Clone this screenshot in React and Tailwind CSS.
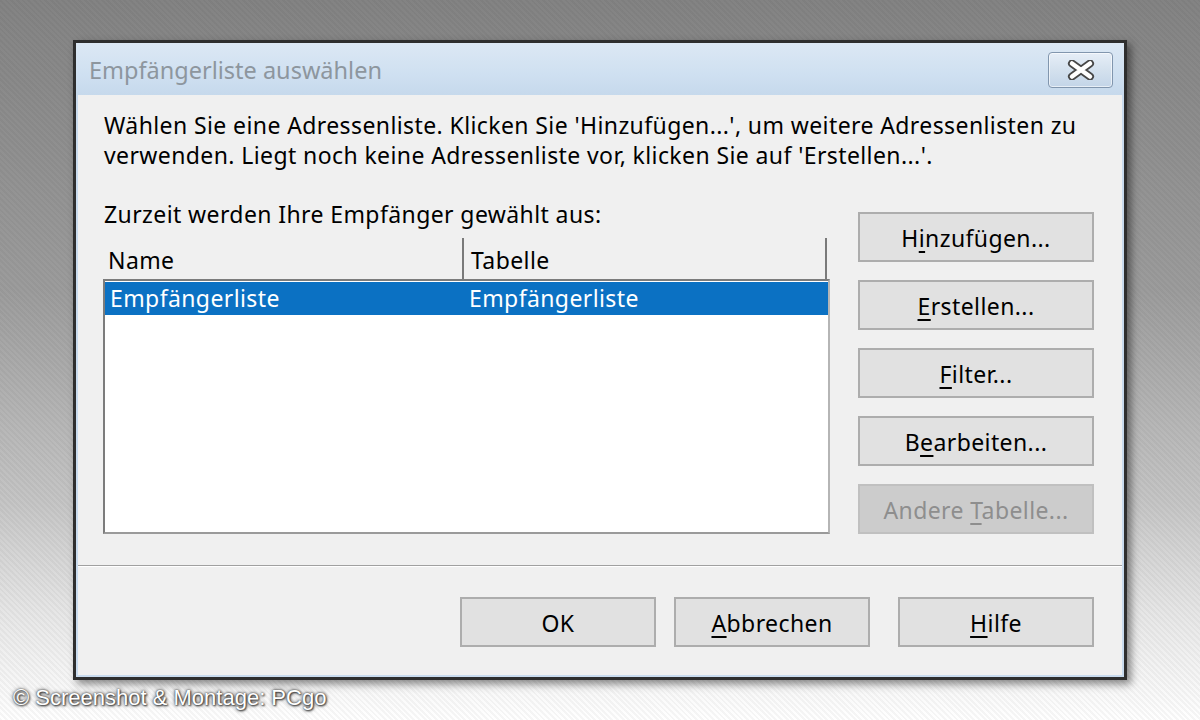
import React from "react";

function Btn({ children, disabled = false, className = "" }) {
  return (
    <div
      className={
        "flex items-center justify-center h-[50px] border-2 pt-[3px] text-[23px] tracking-[0.4px] " +
        (disabled
          ? "bg-[#cccccc] border-[#c0c0c0] text-[#8e8e8e] "
          : "bg-[#e1e1e1] border-[#adadad] text-black ") +
        className
      }
    >
      <span>{children}</span>
    </div>
  );
}

function U({ children }) {
  return <span className="underline underline-offset-[4px] decoration-[1.5px]">{children}</span>;
}

export default function App() {
  return (
    <div className="w-[1200px] h-[720px] overflow-hidden flex flex-col bg-[image:repeating-linear-gradient(45deg,rgba(0,0,0,0.035)_0px,rgba(0,0,0,0.035)_2px,transparent_2px,transparent_4px),linear-gradient(180deg,#838383_0%,#9c9c9c_40%,#c6c6c6_70%,#e6e6e6_85%,#ffffff_100%)] font-['Noto_Sans',sans-serif]">
      {/* Dialog */}
      <div className="ml-[73px] mt-[40px] w-[1054px] h-[640px] border-[3px] border-[#2e2e2e] bg-[#c9dbee] flex flex-col shadow-[4px_4px_8px_rgba(0,0,0,0.45)]">
        {/* Title bar */}
        <div className="h-[52px] flex items-start bg-[linear-gradient(180deg,#dce8f4_0%,#cfe0f1_60%,#c6d9ec_100%)]">
          <div className="ml-[13px] mt-[12px] text-[23.5px] leading-[30px] text-[#8d969e]">
            Empfängerliste auswählen
          </div>
          <div className="ml-auto mr-[11px] mt-[9px] w-[65px] h-[36px] rounded-[4px] border border-[#8196ae] bg-[linear-gradient(180deg,#e6eef7_0%,#d4e1ee_50%,#c3d5e8_100%)] shadow-[inset_0_0_0_1px_rgba(255,255,255,0.6)] flex items-center justify-center">
            <svg width="28" height="20" viewBox="0 0 28 20">
              <path d="M5 3.5 L23 16.5 M23 3.5 L5 16.5" stroke="#474747" strokeWidth="8" strokeLinecap="round" />
              <path d="M5 3.5 L23 16.5 M23 3.5 L5 16.5" stroke="#ffffff" strokeWidth="4.5" strokeLinecap="round" />
            </svg>
          </div>
        </div>

        {/* Client area */}
        <div className="flex-1 mx-[2px] mb-[2px] bg-[#f0f0f0] flex flex-col">
          <div className="pl-[26px] pt-[15px] text-[23px] tracking-[0.4px] leading-[30px] text-black">
            <div>Wählen Sie eine Adressenliste. Klicken Sie 'Hinzufügen...', um weitere Adressenlisten zu</div>
            <div>verwenden. Liegt noch keine Adressenliste vor, klicken Sie auf 'Erstellen...'.</div>
          </div>

          <div className="flex pl-[25px] mt-[29px]">
            {/* Left column */}
            <div className="w-[727px] flex flex-col">
              <div className="ml-[1px] text-[23px] tracking-[0.4px] leading-[30px] text-black">
                Zurzeit werden Ihre Empfänger gewählt aus:
              </div>
              <div className="mt-[9px] h-[41px] flex text-[23px] tracking-[0.4px] text-black">
                <div className="w-[361px] pl-[5px] pt-[5px] border-r-2 border-[#7a7a7a]">Name</div>
                <div className="w-[363px] pl-[7px] pt-[5px] border-r-2 border-[#7a7a7a]">Tabelle</div>
              </div>
              <div className="h-[255px] border-2 border-[#7c7c7c] border-b-[#9a9a9a] border-r-[#b5b5b5] bg-white pt-[1px]">
                <div className="h-[33px] bg-[#0b71c3] text-white text-[23px] tracking-[0.4px] flex items-center">
                  <div className="w-[361px] pl-[5px]">Empfängerliste</div>
                  <div className="pl-[3px]">Empfängerliste</div>
                </div>
              </div>
            </div>

            {/* Right column */}
            <div className="ml-[28px] mt-[13px] w-[236px] flex flex-col gap-[18px]">
              <Btn>H<U>i</U>nzufügen...</Btn>
              <Btn><U>E</U>rstellen...</Btn>
              <Btn><U>F</U>ilter...</Btn>
              <Btn>B<U>e</U>arbeiten...</Btn>
              <Btn disabled>Andere <U>T</U>abelle...</Btn>
            </div>
          </div>

          {/* Separator */}
          <div className="mt-[31px] h-[2px] border-t border-[#a0a0a0] border-b border-b-white" />

          {/* Bottom buttons */}
          <div className="mt-[30px] flex justify-end pr-[28px]">
            <Btn className="w-[196px]">OK</Btn>
            <Btn className="w-[196px] ml-[18px]"><U>A</U>bbrechen</Btn>
            <Btn className="w-[196px] ml-[28px]"><U>H</U>ilfe</Btn>
          </div>
        </div>
      </div>

      {/* Copyright */}
      <div className="ml-[13px] mt-[5px] text-[22px] leading-[26px] text-white font-['Liberation_Sans',Arial,sans-serif] [text-shadow:0_0_2px_#3a3a3a,1px_1px_2px_#3a3a3a,0_0_4px_#555]">
        © Screenshot &amp; Montage: PCgo
      </div>
    </div>
  );
}
